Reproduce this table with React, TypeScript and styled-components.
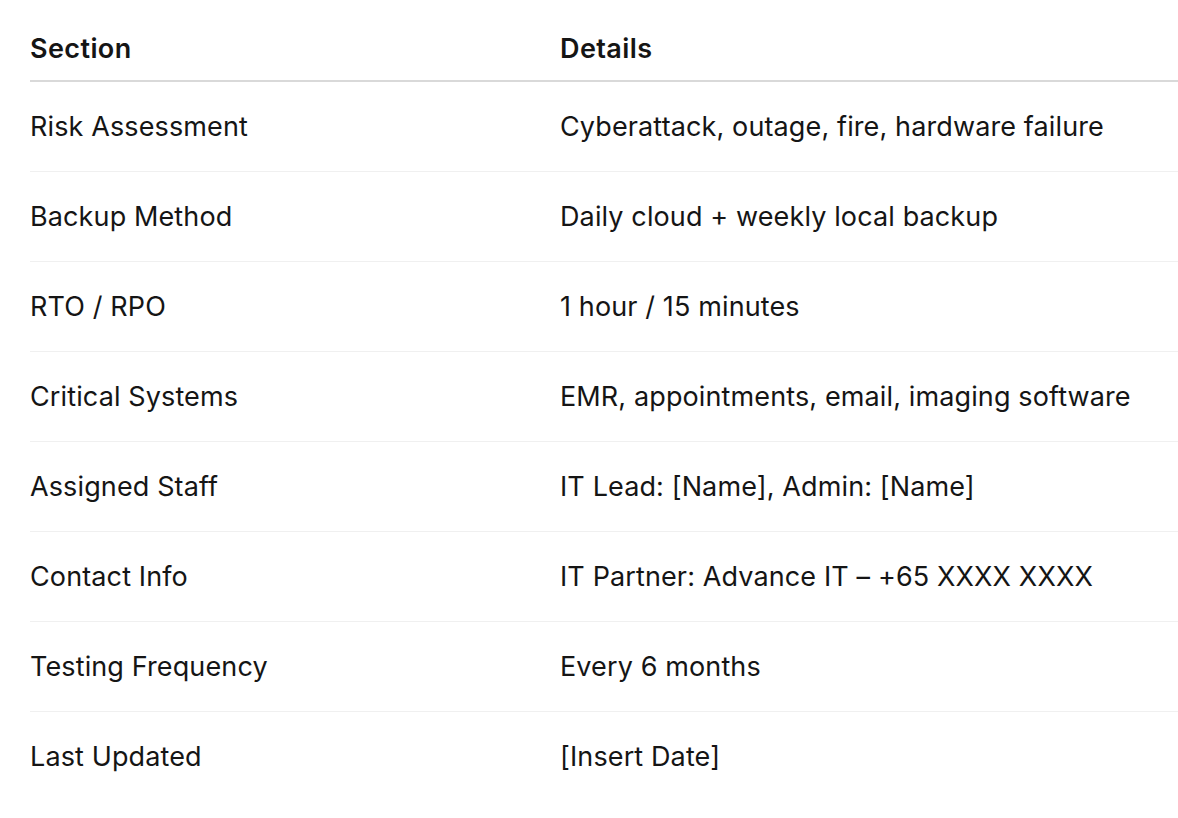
import React from 'react'
import styled, { createGlobalStyle } from 'styled-components'

const GlobalStyle = createGlobalStyle`
  html, body {
    margin: 0;
    padding: 0;
    background: #ffffff;
  }
  body {
    font-family: Inter, "Noto Sans", sans-serif;
    color: #151515;
    -webkit-font-smoothing: antialiased;
  }
`

const rows: [string, string][] = [
  ['Risk Assessment', 'Cyberattack, outage, fire, hardware failure'],
  ['Backup Method', 'Daily cloud + weekly local backup'],
  ['RTO / RPO', '1 hour / 15 minutes'],
  ['Critical Systems', 'EMR, appointments, email, imaging software'],
  ['Assigned Staff', 'IT Lead: [Name], Admin: [Name]'],
  ['Contact Info', 'IT Partner: Advance IT – +65 XXXX XXXX'],
  ['Testing Frequency', 'Every 6 months'],
  ['Last Updated', '[Insert Date]']
]

const App: React.FC = () => {
  return (
    <Page>
      <GlobalStyle />
      <Table>
        <colgroup>
          <col style={{ width: 530 }} />
          <col />
        </colgroup>
        <thead>
          <tr>
            <HeadCell>Section</HeadCell>
            <HeadCell>Details</HeadCell>
          </tr>
        </thead>
        <tbody>
          {rows.map(([section, details], i) => (
            <Row key={section} last={i === rows.length - 1}>
              <Cell>{section}</Cell>
              <Cell>{details}</Cell>
            </Row>
          ))}
        </tbody>
      </Table>
    </Page>
  )
}

const Page = styled.div`
  padding: 14px 0 0 30px;
`

const Table = styled.table`
  width: 100%;
  border-collapse: collapse;
  table-layout: fixed;
`

const HeadCell = styled.th`
  text-align: left;
  font-size: 27px;
  font-weight: 600;
  letter-spacing: 0.4px;
  line-height: 32px;
  padding: 19px 0 15px;
  border-bottom: 2px solid #d9d9d9;
`

const Row = styled.tr<{ last?: boolean }>`
  border-bottom: ${props => (props.last ? 'none' : '1px solid #f0f0f0')};
`

const Cell = styled.td`
  font-size: 27px;
  font-weight: 400;
  letter-spacing: 0.12px;
  line-height: 32px;
  padding: 29px 0 28px;
  vertical-align: middle;
`

export default App
